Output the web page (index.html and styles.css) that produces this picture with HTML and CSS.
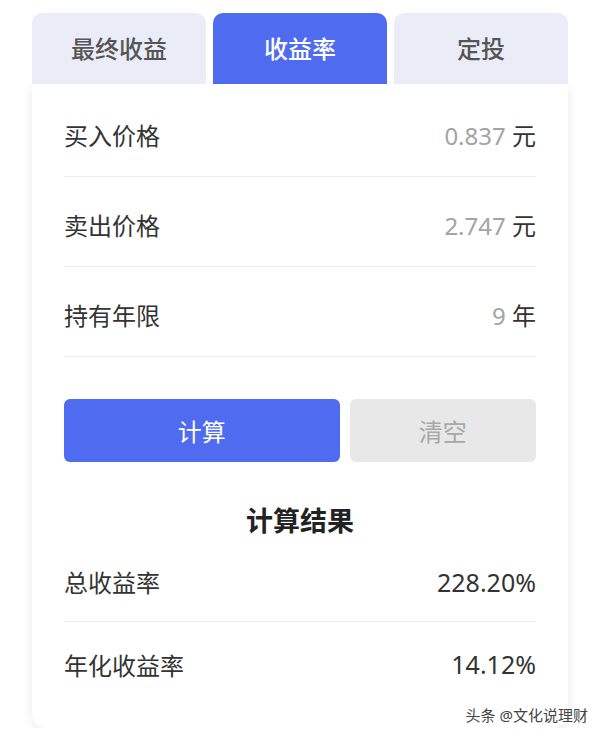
FILE: index.html
```html
<!DOCTYPE html>
<html lang="zh-CN">

<head>
    <meta charset="UTF-8">
    <meta name="viewport" content="width=device-width, initial-scale=1.0">
    <title>收益率计算器</title>
    <link rel="stylesheet" href="styles.css">
</head>

<body>
    <div class="page">
        <!-- Tabs -->
        <div class="tabs">
            <div class="tab">最终收益</div>
            <div class="tab active">收益率</div>
            <div class="tab">定投</div>
        </div>

        <!-- Calculator Card -->
        <div class="card">
            <div class="row">
                <span class="label">买入价格</span>
                <span class="value"><span class="num">0.837</span> 元</span>
            </div>
            <div class="row">
                <span class="label">卖出价格</span>
                <span class="value"><span class="num">2.747</span> 元</span>
            </div>
            <div class="row">
                <span class="label">持有年限</span>
                <span class="value"><span class="num">9</span> 年</span>
            </div>

            <div class="buttons">
                <button class="btn btn-calc">计算</button>
                <button class="btn btn-clear">清空</button>
            </div>

            <h2 class="result-title">计算结果</h2>
            <div class="result-row">
                <span class="label">总收益率</span>
                <span class="result">228.20%</span>
            </div>
            <div class="result-row last">
                <span class="label">年化收益率</span>
                <span class="result">14.12%</span>
            </div>
        </div>
    </div>

    <div class="watermark">头条 @文化说理财</div>
</body>

</html>
```

FILE: styles.css
```css
body {
    font-family: 'Noto Sans', 'Noto Sans CJK SC', sans-serif;
    background: #ffffff;
    margin: 0;
    padding: 0;
    color: #333;
}

.page {
    width: 536px;
    padding: 13px 32px 0;
}

/* Tabs */
.tabs {
    display: flex;
    gap: 7px;
}

.tab {
    flex: 1;
    height: 71px;
    line-height: 71px;
    text-align: center;
    font-size: 24px;
    font-weight: 500;
    color: #555;
    background: #eaedf8;
    border-radius: 10px 10px 0 0;
}

.tab.active {
    background: #4f6bef;
    color: #fff;
}

/* Card */
.card {
    background: #fff;
    border-radius: 0 0 14px 14px;
    box-shadow: 0 3px 12px rgba(0, 0, 0, 0.08);
    padding: 3px 32px 0;
    height: 641px;
}

.row,
.result-row {
    display: flex;
    justify-content: space-between;
    align-items: center;
    border-bottom: 1px solid #ededed;
}

.row {
    height: 90px;
    padding-top: 6px;
    box-sizing: border-box;
}

.label {
    font-size: 24px;
    color: #333;
}

.value {
    font-size: 24px;
    color: #333;
}

.value .num {
    color: #a3a3a3;
}

/* Buttons */
.buttons {
    display: flex;
    gap: 10px;
    margin-top: 42px;
}

.btn {
    height: 63px;
    border: none;
    border-radius: 6px;
    font-family: inherit;
    font-size: 24px;
}

.btn-calc {
    flex: 278;
    background: #4f6bef;
    color: #fff;
}

.btn-clear {
    flex: 184;
    background: #e8e8e8;
    color: #a8a8a8;
}

/* Results */
.result-title {
    margin: 42px 0 0;
    text-align: center;
    font-size: 27px;
    font-weight: 700;
    color: #222;
    line-height: 34px;
}

.result-row {
    height: 84px;
    padding-top: 4px;
    box-sizing: border-box;
}

.result-row.last {
    border-bottom: none;
    padding-top: 0;
}

.result {
    font-size: 25px;
    color: #333;
}

/* Watermark overlay */
.watermark {
    position: absolute;
    right: 12px;
    top: 704px;
    font-size: 15px;
    color: #444;
    text-shadow: 0 0 2px #fff, 0 0 2px #fff;
}
```
